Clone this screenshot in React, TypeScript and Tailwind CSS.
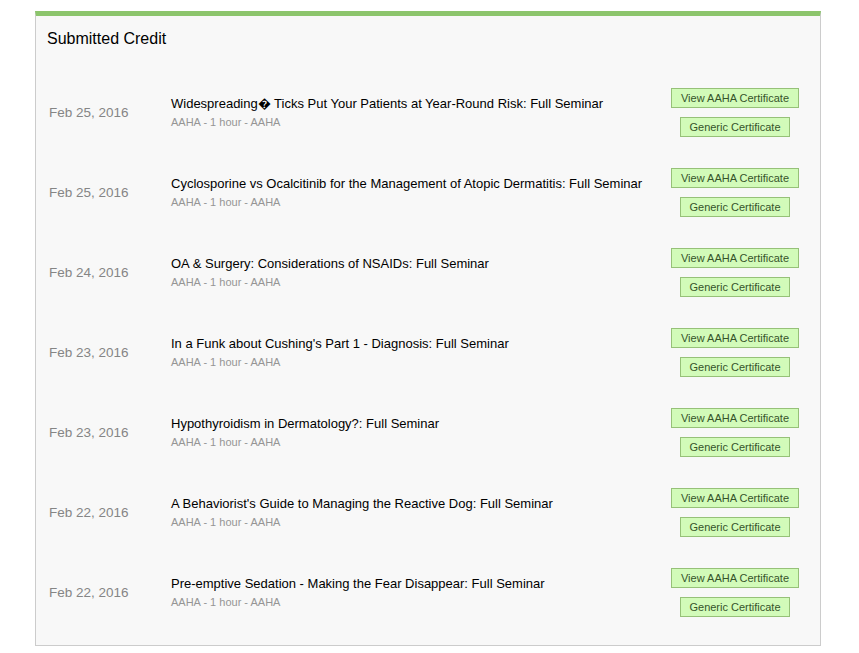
const credits = [
  { date: "Feb 25, 2016", title: "Widespreading\uFFFD Ticks Put Your Patients at Year-Round Risk: Full Seminar" },
  { date: "Feb 25, 2016", title: "Cyclosporine vs Ocalcitinib for the Management of Atopic Dermatitis: Full Seminar" },
  { date: "Feb 24, 2016", title: "OA & Surgery: Considerations of NSAIDs: Full Seminar" },
  { date: "Feb 23, 2016", title: "In a Funk about Cushing's Part 1 - Diagnosis: Full Seminar" },
  { date: "Feb 23, 2016", title: "Hypothyroidism in Dermatology?: Full Seminar" },
  { date: "Feb 22, 2016", title: "A Behaviorist's Guide to Managing the Reactive Dog: Full Seminar" },
  { date: "Feb 22, 2016", title: "Pre-emptive Sedation - Making the Fear Disappear: Full Seminar" },
];

const CertButton = ({ label, width }: { label: string; width: string }) => (
  <button
    type="button"
    className={`${width} h-[20px] border border-[#96c178] bg-[#d2fbb9] text-[11px] leading-[18px] text-[#35542a]`}
  >
    {label}
  </button>
);

export default function App() {
  return (
    <div className="min-h-[653px] bg-white pt-[11px] font-['Liberation_Sans',Arial,sans-serif]">
      <div className="ml-[35px] w-[786px] border-x border-b border-t-[5px] border-[#cccccc] border-t-[#8cc56c] bg-[#f8f8f8] pb-[13px]">
        <div className="h-[56px] pl-[11px] pt-[13px]">
          <h2 className="text-[16px] leading-[20px] text-black">Submitted Credit</h2>
        </div>
        {credits.map((c, i) => (
          <div key={i} className="flex h-[80px] items-center">
            <div className="mt-[2px] w-[135px] shrink-0 pl-[13px] text-[13.5px] text-[#858585]">{c.date}</div>
            <div className="flex-1">
              <p className="text-[13px] leading-[16px] text-black">{c.title}</p>
              <p className="mt-[3px] text-[11px] leading-[14px] text-[#959595]">AAHA - 1 hour - AAHA</p>
            </div>
            <div className="mr-[10px] flex w-[150px] shrink-0 flex-col items-center gap-[9px]">
              <CertButton label="View AAHA Certificate" width="w-[128px]" />
              <CertButton label="Generic Certificate" width="w-[110px]" />
            </div>
          </div>
        ))}
      </div>
    </div>
  );
}
